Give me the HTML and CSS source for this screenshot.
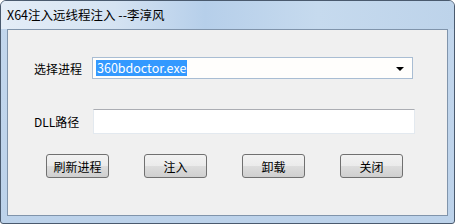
FILE: index.html
```html
<!DOCTYPE html>
<html lang="zh-CN">
<head>
    <meta charset="UTF-8">
    <title>X64注入远线程注入 --李淳风</title>
    <link rel="stylesheet" href="styles.css">
</head>
<body>

    <div class="window">
        <div class="title-bar">X64注入远线程注入 --李淳风</div>

        <div class="client">
            <div class="row">
                <span class="label">选择进程</span>
                <div class="combo">
                    <span class="selected">360bdoctor.exe</span>
                    <span class="arrow"></span>
                </div>
            </div>

            <div class="row row-dll">
                <span class="label">DLL路径</span>
                <input class="path-input" type="text">
            </div>

            <div class="buttons">
                <button>刷新进程</button>
                <button>注入</button>
                <button>卸载</button>
                <button>关闭</button>
            </div>
        </div>
    </div>

</body>
</html>
```

FILE: styles.css
```css
body {
    margin: 0;
    font-family: "Noto Sans CJK SC", sans-serif;
    font-size: 12px;
    background: #ffffff;
}
.window {
    width: 453px;
    height: 222px;
    border: 1px solid #4a5a6e;
    border-radius: 6px 6px 3px 3px;
    background: linear-gradient(to bottom, #c3d7ed, #bcd2ea);
    display: flex;
    flex-direction: column;
    overflow: hidden;
}
.title-bar {
    height: 28px;
    line-height: 27px;
    padding-left: 6px;
    font-size: 12.5px;
    color: #000;
    background: linear-gradient(to right, #e4edf7 0%, #d5e3f2 25%, #b6cfea 45%, #c6daee 70%, #bdd3ea 100%);
}
.client {
    margin: 0 6px;
    height: 187px;
    border: 1px solid #8094ab;
    background: #f0f0f0;
    padding: 27px 0 0 26px;
    box-sizing: border-box;
}
.row {
    display: flex;
    align-items: center;
}
.label {
    width: 58px;
    color: #000;
}
.combo {
    width: 321px;
    height: 22px;
    box-sizing: border-box;
    border: 1px solid #a9bdd3;
    background: #fffefc;
    display: flex;
    align-items: center;
    padding-left: 3px;
    position: relative;
}
.selected {
    background: #3399ff;
    color: #fff;
    font-size: 12.5px;
    line-height: 16px;
    padding: 0 1px;
}
.arrow {
    position: absolute;
    right: 8px;
    top: 9px;
    border-left: 4px solid transparent;
    border-right: 4px solid transparent;
    border-top: 4px solid #000;
}
.row-dll {
    margin-top: 30px;
}
.path-input {
    margin: 0 0 0 1px;
    width: 322px;
    height: 25px;
    box-sizing: border-box;
    border: 1px solid #e3e9ef;
    border-top-color: #abadb3;
    background: #fff;
    outline: none;
}
.buttons {
    display: flex;
    gap: 35px;
    margin-top: 20px;
    padding-left: 12px;
}
.buttons button {
    width: 63px;
    height: 24px;
    font-family: "Noto Sans CJK SC", sans-serif;
    font-size: 12px;
    color: #000;
    border: 1px solid #707070;
    border-radius: 3px;
    background: linear-gradient(to bottom, #f2f2f2 0%, #ebebeb 50%, #dddddd 51%, #cfcfcf 100%);
    padding: 0;
}
```
